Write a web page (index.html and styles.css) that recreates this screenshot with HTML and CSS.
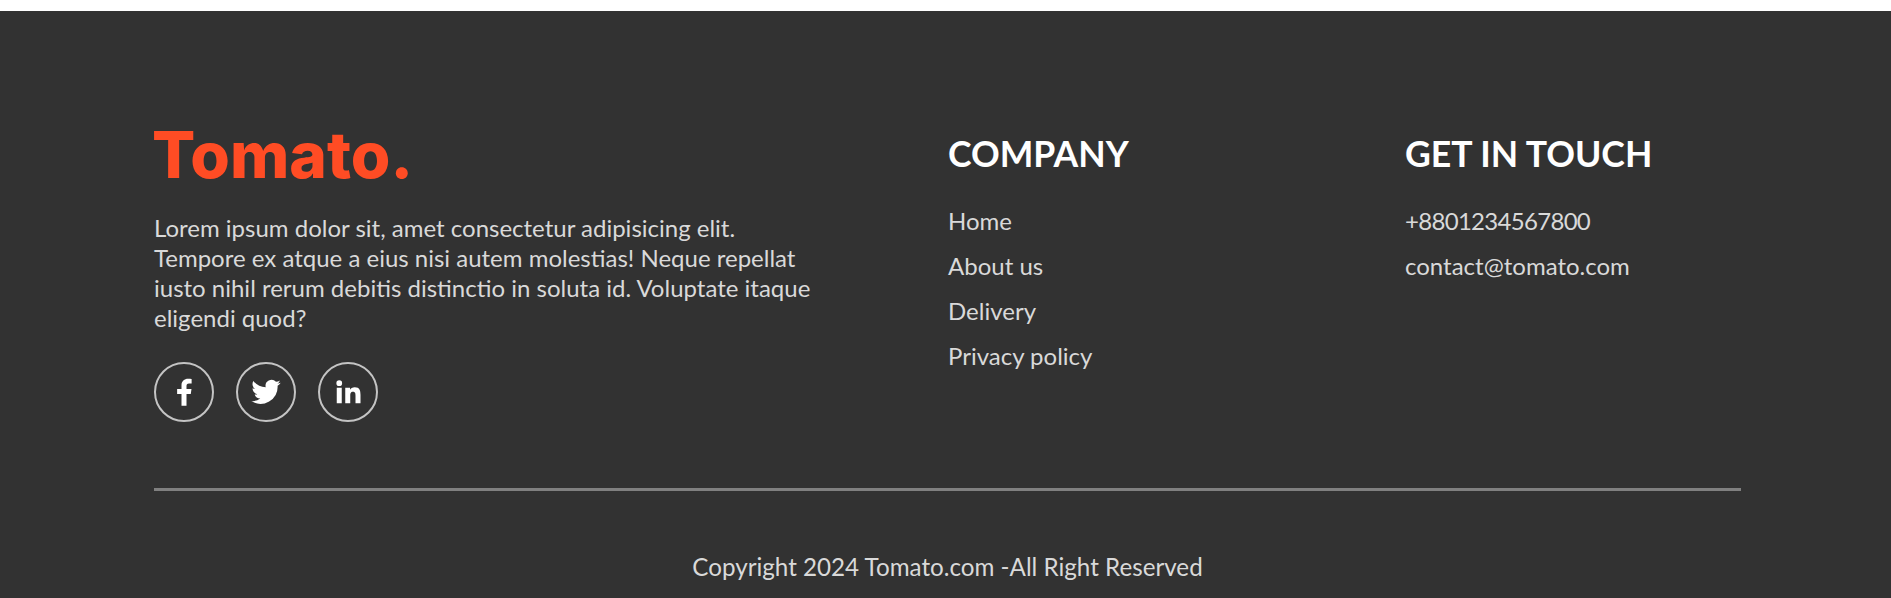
FILE: index.html
```html
<!DOCTYPE html>
<html lang="en">
<head>
<meta charset="utf-8">
<title>Tomato</title>
<link rel="stylesheet" href="styles.css">
</head>
<body>
<footer class="footer">
  <div class="columns">
    <div class="col-brand">
      <div class="logo">Tomato.</div>
      <p class="about">Lorem ipsum dolor sit, amet consectetur adipisicing elit. Tempore ex atque a eius nisi autem molestias! Neque repellat iusto nihil rerum debitis distinctio in soluta id. Voluptate itaque eligendi quod?</p>
      <div class="socials">
        <span class="social"><svg viewBox="0 0 24 24" width="30" height="30"><path fill="#fff" d="M14 23v-9.500h3.400l.6-4h-4V7.200c0-1.200.4-2 2-2h2.100V1.600C17.700 1.500 16.500 1.400 15.300 1.400c-3 0-5.300 1.900-5.300 5.300v2.800H6.500v4H10V23z"/></svg></span>
        <span class="social"><svg viewBox="0 0 24 24" width="32" height="32"><path fill="#fff" d="M23 5.100c-.8.400-1.700.6-2.600.7.900-.6 1.600-1.400 2-2.500-.9.500-1.800.9-2.900 1.100A4.500 4.500 0 0 0 11.800 8.500 12.800 12.800 0 0 1 2.500 3.800a4.500 4.500 0 0 0 1.400 6c-.7 0-1.400-.2-2-.6 0 2.200 1.500 4 3.600 4.500-.7.200-1.400.2-2 .1.600 1.800 2.200 3.100 4.200 3.100A9 9 0 0 1 1 18.800 12.800 12.800 0 0 0 20.700 7.400c.9-.6 1.700-1.400 2.300-2.300z"/></svg></span>
        <span class="social"><svg viewBox="0 0 24 24" width="30" height="30"><path fill="#fff" d="M3 8.500h4V21H3zM5 2.600a2.300 2.300 0 1 1 0 4.600 2.300 2.300 0 0 1 0-4.600zM9.800 8.500h3.800v1.700c.6-1 1.900-2 3.800-2 4 0 4.600 2.600 4.600 6V21h-4v-6c0-1.500 0-3.300-2-3.300s-2.200 1.500-2.200 3.200V21h-4z"/></svg></span>
      </div>
    </div>
    <div class="col-company">
      <h2 class="heading">COMPANY</h2>
      <ul class="links">
        <li>Home</li>
        <li>About us</li>
        <li>Delivery</li>
        <li>Privacy policy</li>
      </ul>
    </div>
    <div class="col-contact">
      <h2 class="heading">GET IN TOUCH</h2>
      <ul class="links">
        <li class="phone">+8801234567800</li>
        <li>contact@tomato.com</li>
      </ul>
    </div>
  </div>
  <hr class="rule">
  <p class="copyright">Copyright 2024 Tomato.com -All Right Reserved</p>
</footer>
</body>
</html>
```
FILE: styles.css
```css
* { box-sizing: border-box; margin: 0; padding: 0; }
html, body { height: 100%; background: #fff; overflow: hidden; }
body { padding-top: 11px; font-family: "Lato", "Noto Sans", sans-serif; }
.footer {
  height: 587px;
  background: #323232;
  color: #d9d9d9;
  padding: 116px 150px 0 154px;
}
.columns { display: grid; grid-template-columns: 794px 457px 1fr; }
.logo { font-family: "Inter", "Lato", sans-serif; font-weight: 800; font-size: 64px; line-height: 56px; margin-left: -2px; color: #ff4c24; }
.about { width: 665px; margin-top: 30px; font-size: 24px; line-height: 30px; }
.socials { display: flex; gap: 22px; margin-top: 29px; }
.social { width: 60px; height: 60px; border: 2px solid #c4c4c4; border-radius: 50%; display: flex; align-items: center; justify-content: center; }
.heading { font-size: 35.6px; line-height: 44px; font-weight: 700; color: #fff; margin-top: 5px; }
.links { list-style: none; margin-top: 30px; font-size: 24px; line-height: 30px; }
.links li { margin-bottom: 15px; }
.links .phone { letter-spacing: -0.7px; }
.rule { border: none; height: 3px; background: #808080; margin-top: 66px; }
.copyright { text-align: center; font-size: 24.2px; line-height: 30px; margin-top: 61px; }
```
